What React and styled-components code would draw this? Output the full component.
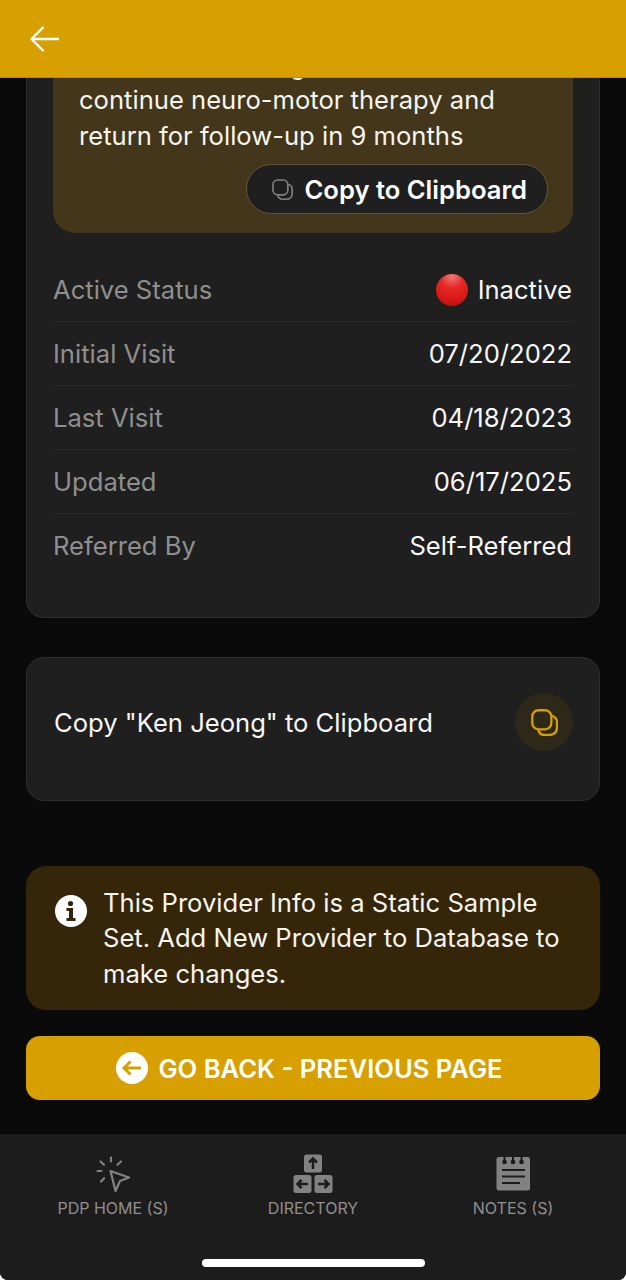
import React from 'react';
import styled, { createGlobalStyle } from 'styled-components';

const GOLD = '#d7a000';

const GlobalStyle = createGlobalStyle`
  html, body {
    margin: 0;
    padding: 0;
    background: #fff;
  }
  * {
    box-sizing: border-box;
  }
`;

const Page = styled.div`
  width: 626px;
  height: 1280px;
  display: flex;
  flex-direction: column;
  overflow: hidden;
  background: #0a0a0a;
  border-radius: 0 0 8px 8px;
  color: #fff;
  font-family: Inter, 'Liberation Sans', sans-serif;
  font-size: 25.6px;
`;

const Header = styled.header`
  position: relative;
  z-index: 2;
  flex: 0 0 78px;
  display: flex;
  align-items: center;
  padding: 0 28px;
  background: ${GOLD};
  border-bottom: 1px solid #b88a06;
`;

const BackButton = styled.button`
  display: flex;
  padding: 0;
  border: 0;
  background: none;
  cursor: pointer;
`;

/* the page is scrolled: the top of the first card sits under the header */
const Scroll = styled.main`
  flex: 1;
  min-height: 0;
  overflow: hidden;
  padding: 0 26px;
`;

const Card = styled.section`
  background: #1f1f1f;
  border: 1px solid #2e2e2e;
  border-radius: 18px;
`;

const DetailCard = styled(Card)`
  margin-top: -31.5px;
  padding: 0 26px 38.5px;
  border-top: 0;
  border-top-left-radius: 0;
  border-top-right-radius: 0;
`;

const Note = styled.div`
  display: flex;
  flex-direction: column;
  padding: 0 25px 18.5px 26px;
  background: #43361a;
  border-radius: 0 0 22px 22px;
`;

const NoteText = styled.p`
  margin: 0;
  line-height: 35.84px;
  color: #f7f5ef;
`;

const ClipboardPill = styled.button`
  align-self: flex-end;
  display: flex;
  align-items: center;
  gap: 11px;
  height: 50px;
  margin-top: 10px;
  padding: 0 20px 0 25px;
  border: 1.5px solid #62553a;
  border-radius: 26px;
  background: #1f1f1f;
  color: #fff;
  font-family: inherit;
  font-size: 25.6px;
  font-weight: 600;
`;

const Rows = styled.dl`
  margin: 25.5px 0 0;
`;

const Row = styled.div`
  display: flex;
  align-items: center;
  justify-content: space-between;
  height: 64px;
  border-bottom: 1px solid ${(p) => (p.$last ? 'transparent' : '#2a2a2a')};
`;

const Label = styled.dt`
  color: #8f8f8f;
`;

const Value = styled.dd`
  display: flex;
  align-items: center;
  gap: 10px;
  margin: 0;
  padding-right: 1px;
  color: #f7f7f7;
`;

const RedDot = styled.span`
  width: 32px;
  height: 32px;
  border-radius: 50%;
  background: radial-gradient(circle at 50% 8%, #f07a76 0%, #e62a26 34%, #d81818 68%, #a90f0f 100%);
`;

const CopyCard = styled(Card)`
  display: flex;
  align-items: center;
  justify-content: space-between;
  height: 144px;
  margin-top: 39px;
  padding: 0 26px 13px 27px;
  color: #f7f7f7;
`;

const CopyRound = styled.span`
  display: flex;
  align-items: center;
  justify-content: center;
  width: 58px;
  height: 58px;
  border-radius: 50%;
  background: #2e2818;
`;

const InfoBox = styled.div`
  display: flex;
  gap: 16px;
  margin-top: 65px;
  padding: 19px 27px 18px 29px;
  border-radius: 20px;
  background: #35260a;
  line-height: 35.84px;
  color: #f7f5ef;
`;

const InfoIcon = styled.svg`
  flex: 0 0 32px;
  margin-top: 10px;
`;

const GoBack = styled.button`
  display: flex;
  align-items: center;
  justify-content: center;
  gap: 10px;
  width: 100%;
  height: 64px;
  margin-top: 26px;
  padding: 0 7px 0 0;
  border: 0;
  border-radius: 14px;
  background: ${GOLD};
  color: #fff;
  font-family: inherit;
  font-size: 25.6px;
  font-weight: 600;
`;

const TabBar = styled.nav`
  position: relative;
  flex: 0 0 146px;
  display: grid;
  grid-template-columns: repeat(3, 200px);
  justify-content: center;
  padding-top: 18px;
  background: #1c1c1c;
`;

const Tab = styled.a`
  display: flex;
  flex-direction: column;
  align-items: center;
  font-size: 16px;
  line-height: 20px;
  color: #8f8f8f;
`;

const TabIcon = styled.svg`
  display: block;
  height: 46px;
`;

const HomeIndicator = styled.span`
  position: absolute;
  left: 202px;
  bottom: 13px;
  width: 223px;
  height: 8px;
  border-radius: 4px;
  background: #fff;
`;

const CopyIcon = ({ size, color, width = 2 }) => (
  <svg width={size} height={size} viewBox="0 0 26 26" fill="none" stroke={color} strokeWidth={width}>
    <rect x="1.200" y="1.200" width="18.400" height="18.400" rx="6" />
    <path d="M20 6.500c3 1 5 3 5 6v5.500c0 4-3 7-7 7h-4.500c-3.500 0-6-2-6.500-5" />
  </svg>
);

/* tab icons share one 46px tall viewBox, so labels line up */
const ClickIcon = () => (
  <TabIcon width="44" height="46" viewBox="0 0 44 46" fill="none" stroke="#828282" strokeWidth="2.200" strokeLinecap="round" strokeLinejoin="round">
    <path d="M20 5.500v4M9.500 9.500l3.500 3.200M30 9.500l-3.600 3.200M6.500 19h4M10 29.500l3.200-3.200" />
    <path d="M19.500 19l18.500 6.500-9 3.500-4.500 10z" />
  </TabIcon>
);

const KeysIcon = () => (
  <TabIcon width="42" height="46" viewBox="0 0 42 46">
    <g fill="#828282">
      <rect x="12" y="2.500" width="18" height="18" rx="2.500" />
      <rect x="1.500" y="23" width="18" height="18" rx="2.500" />
      <rect x="22.500" y="23" width="18" height="18" rx="2.500" />
    </g>
    <g fill="none" stroke="#1c1c1c" strokeWidth="2.500">
      <path d="M21 17V7M17 10.500l4-4 4 4" />
      <path d="M16 32H5.500M9.500 28l-4 4 4 4" />
      <path d="M26 32h10.500M32.500 28l4 4-4 4" />
    </g>
  </TabIcon>
);

const NotesIcon = () => (
  <TabIcon width="36" height="46" viewBox="0 0 36 46">
    <rect x="1.500" y="5" width="33.500" height="33.500" rx="2.500" fill="#828282" />
    <g fill="#1c1c1c">
      <path d="M8.500 5h2v5h-2zM17 5h2v5h-2zM25.500 5h2v5h-2z" />
      <circle cx="9.500" cy="10" r="2.300" />
      <circle cx="18" cy="10" r="2.300" />
      <circle cx="26.500" cy="10" r="2.300" />
    </g>
    <path d="M7 18h23M7 24.500h23M7 31h18" fill="none" stroke="#1c1c1c" strokeWidth="2" />
  </TabIcon>
);

const rows = [
  ['Initial Visit', '07/20/2022'],
  ['Last Visit', '04/18/2023'],
  ['Updated', '06/17/2025'],
  ['Referred By', 'Self-Referred'],
];

export default function App() {
  return (
    <Page>
      <GlobalStyle />
      <Header>
        <BackButton aria-label="Back">
          <svg width="32" height="30" viewBox="0 0 32 30" fill="none" stroke="#fff" strokeWidth="2.400" strokeLinecap="round" strokeLinejoin="round">
            <path d="M30 15H4M15 3.500L3.500 15 15 26.500" />
          </svg>
        </BackButton>
      </Header>

      <Scroll>
        <DetailCard>
          <Note>
            <NoteText>
              Ken is now healing and should
              <br />
              continue neuro-motor therapy and
              <br />
              return for follow-up in 9 months
            </NoteText>
            <ClipboardPill>
              <CopyIcon size={21} color="#828282" />
              Copy to Clipboard
            </ClipboardPill>
          </Note>

          <Rows>
            <Row>
              <Label>Active Status</Label>
              <Value>
                <RedDot />
                Inactive
              </Value>
            </Row>
            {rows.map(([label, value], i) => (
              <Row key={label} $last={i === rows.length - 1}>
                <Label>{label}</Label>
                <Value>{value}</Value>
              </Row>
            ))}
          </Rows>
        </DetailCard>

        <CopyCard>
          Copy "Ken Jeong" to Clipboard
          <CopyRound>
            <CopyIcon size={27} color={GOLD} width={2.2} />
          </CopyRound>
        </CopyCard>

        <InfoBox>
          <InfoIcon width="32" height="32" viewBox="0 0 32 32">
            <circle cx="16" cy="16" r="16" fill="#fff" />
            <circle cx="15.500" cy="8.500" r="2.600" fill="#35260a" />
            <path d="M11.500 13h6.500v10h2.500v3h-9v-3h2.500v-7h-2.500z" fill="#35260a" />
          </InfoIcon>
          <span>This Provider Info is a Static Sample Set. Add New Provider to Database to make changes.</span>
        </InfoBox>

        <GoBack>
          <svg width="32" height="32" viewBox="0 0 32 32" fill="none">
            <circle cx="16" cy="16" r="16" fill="#fff" />
            <path d="M25 16H8M14.500 9.500L8 16l6.500 6.500" stroke={GOLD} strokeWidth="3" />
          </svg>
          GO BACK - PREVIOUS PAGE
        </GoBack>
      </Scroll>

      <TabBar>
        <Tab>
          <ClickIcon />
          PDP HOME (S)
        </Tab>
        <Tab>
          <KeysIcon />
          DIRECTORY
        </Tab>
        <Tab>
          <NotesIcon />
          NOTES (S)
        </Tab>
        <HomeIndicator />
      </TabBar>
    </Page>
  );
}
